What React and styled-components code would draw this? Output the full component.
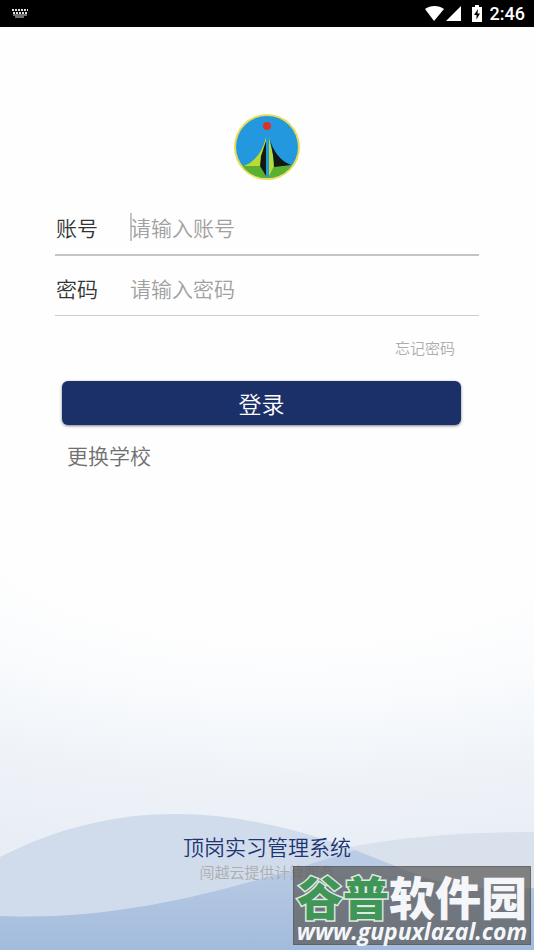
import * as React from "react";
import styled, { createGlobalStyle } from "styled-components";

const GlobalStyle = createGlobalStyle`
  *,
  *::before,
  *::after {
    box-sizing: border-box;
  }

  body {
    margin: 0;
    background: #fefefe;
    font-family: "Noto Sans CJK SC", "Noto Sans", sans-serif;
    font-weight: 350;
  }
`;

const Page = styled.div`
  display: flex;
  flex-direction: column;
  min-height: 100vh;
`;

const StatusBar = styled.header`
  display: flex;
  align-items: center;
  justify-content: space-between;
  height: 27px;
  padding: 0 9px 0 12px;
  background: #000;
  color: #fff;
`;

const StatusIcons = styled.div`
  display: flex;
  align-items: center;
`;

const BatteryIcon = styled.svg`
  margin: 0 8px;
`;

const Clock = styled.time`
  font-family: Roboto, sans-serif;
  font-size: 18px;
  font-weight: 500;
  line-height: 27px;
`;

const Main = styled.main`
  display: flex;
  flex-direction: column;
  padding: 86px 55px 0;
`;

const Logo = styled.svg`
  align-self: center;
  margin-bottom: 21px;
`;

const LoginForm = styled.form`
  display: flex;
  flex-direction: column;
`;

const Field = styled.div`
  display: flex;
  align-items: center;
  height: 54px;
  padding-bottom: 2px;
  border-bottom: ${({ $active }) =>
    $active ? "2px solid #c4c4c4" : "1px solid #cdcdcd"};

  & + & {
    margin-top: 6px;
  }
`;

const Label = styled.label`
  width: 75px;
  padding-left: 1px;
  color: #333;
  font-size: 21px;
  line-height: 28px;
`;

const Caret = styled.span`
  width: 2px;
  height: 28px;
  margin-right: -2px;
  background: #c4c4c4;
`;

const Input = styled.input`
  flex: 1;
  min-width: 0;
  padding: 0;
  border: 0;
  outline: 0;
  background: transparent;
  color: #333;
  font-family: inherit;
  font-size: 21px;
  font-weight: inherit;
  line-height: 28px;

  &::placeholder {
    color: #a0a0a0;
    opacity: 1;
  }
`;

const ForgotLink = styled.a`
  align-self: flex-end;
  margin: 20px 24px 0 0;
  color: #adadad;
  font-size: 15px;
  line-height: 24px;
  text-decoration: none;
`;

const LoginButton = styled.button`
  height: 44px;
  margin: 21px 18px 0 7px;
  padding: 0;
  border: 0;
  border-radius: 6px;
  background: #1b3069;
  box-shadow: 0 1px 3px rgba(0, 0, 0, 0.5);
  color: #fff;
  font-family: inherit;
  font-size: 23px;
  font-weight: inherit;
  line-height: 44px;
`;

const SchoolLink = styled.a`
  align-self: flex-start;
  margin: 16px 0 0 12px;
  color: #707070;
  font-size: 21px;
  line-height: 28px;
  text-decoration: none;
`;

const Footer = styled.footer`
  position: relative;
  display: flex;
  flex: 1;
  flex-direction: column;
  align-items: center;
  justify-content: flex-end;
  min-height: 240px;
  margin-top: 50px;
  padding-bottom: 66px;
  background: radial-gradient(
    ellipse 200% 100% at 55% 0,
    #fefefe 28%,
    #f9fbfd 42%,
    #eff3f8 60%,
    #e9eef6 78%
  );
`;

const Hills = styled.svg`
  position: absolute;
  bottom: 0;
  left: 0;
  width: 100%;
  height: 140px;
`;

const SystemName = styled.p`
  position: relative;
  margin: 0;
  color: #1d3470;
  font-size: 21px;
  line-height: 28px;
`;

const Provider = styled.p`
  position: relative;
  margin: 0;
  color: #adadad;
  font-size: 15px;
  line-height: 24px;
`;

const Watermark = styled.div`
  position: absolute;
  right: 3px;
  bottom: 5px;
  display: flex;
  flex-direction: column;
  align-items: center;
  justify-content: space-between;
  width: 238px;
  height: 79px;
  padding: 6px 0 0;
  border: 1px solid rgba(60, 60, 60, 0.3);
  background: rgba(84, 82, 80, 0.68);
  color: #f4f6fa;
  white-space: nowrap;
`;

const WatermarkName = styled.span`
  font-size: 46px;
  font-weight: 900;
  line-height: 44px;
`;

const Green = styled.span`
  color: #3f9656;
  -webkit-text-stroke: 3px #dfe9e3;
  paint-order: stroke fill;
`;

const WatermarkUrl = styled.span`
  font-family: "Open Sans", sans-serif;
  font-size: 23px;
  font-style: italic;
  font-weight: 700;
  line-height: 26px;
`;

function App() {
  return (
    <Page>
      <GlobalStyle />
      <StatusBar>
        <svg width="17" height="10" viewBox="0 0 17 10" aria-hidden="true">
          <path
            d="M0 1h16M1 4h15"
            stroke="#ddd"
            strokeWidth="2"
            strokeDasharray="2 1"
          />
          <path d="M1 6h14M3 8h9" stroke="#ddd" strokeWidth="1" />
        </svg>
        <StatusIcons>
          <svg width="40" height="17" viewBox="0 0 40 17" aria-hidden="true">
            <path d="M1 4C6 0 15 0 20 4L10 16Z" fill="#fff" />
            <path d="M37 1V16H22Z" fill="#fff" />
          </svg>
          <BatteryIcon width="10" height="17" viewBox="0 0 10 17" aria-hidden="true">
            <path d="M3 0h4v2h3v15H0V2h3Z" fill="#fff" />
            <path d="M6 4L2 10h2.5v4.500L8 8.500H5.500Z" fill="#000" />
          </BatteryIcon>
          <Clock>2:46</Clock>
        </StatusIcons>
      </StatusBar>

      <Main>
        <Logo width="68" height="68" viewBox="0 0 68 68" role="img" aria-label="校徽">
          <defs>
            <clipPath id="disc">
              <circle cx="34" cy="34" r="31" />
            </clipPath>
          </defs>
          <circle cx="34" cy="34" r="33" fill="#e9dc55" />
          <g clipPath="url(#disc)">
            <path d="M0 0H68V68H0Z" fill="#2398df" />
            <path d="M0 53Q34 51 68 53V68H0Z" fill="#5cb030" />
            <path d="M33 24Q28 46 11 53H28L33 40Z" fill="#b9dc35" />
            <path d="M33 28L28 43L27 53L33 63Z" fill="#101a10" />
            <path d="M36 24L40 42L41 53L36 63Z" fill="#b9dc35" />
            <path d="M36 24Q42 46 58 52L41 54Q41 42 36 24Z" fill="#101a10" />
          </g>
          <path d="M34.500 25V64" stroke="#2398df" strokeWidth="3" />
          <circle cx="34" cy="13" r="4" fill="#df3023" />
        </Logo>

        <LoginForm onSubmit={(event) => event.preventDefault()}>
          <Field $active>
            <Label htmlFor="account">账号</Label>
            <Caret />
            <Input id="account" type="text" placeholder="请输入账号" />
          </Field>
          <Field>
            <Label htmlFor="password">密码</Label>
            <Input id="password" type="password" placeholder="请输入密码" />
          </Field>
          <ForgotLink href="#forgot">忘记密码</ForgotLink>
          <LoginButton type="submit">登录</LoginButton>
          <SchoolLink href="#school">更换学校</SchoolLink>
        </LoginForm>
      </Main>

      <Footer>
        <Hills viewBox="0 0 534 140" preserveAspectRatio="none" aria-hidden="true">
          <defs>
            <linearGradient id="front" x1="0" y1="0" x2="0" y2="1">
              <stop offset="0" stopColor="#bccde6" />
              <stop offset="1" stopColor="#a3bbdc" />
            </linearGradient>
          </defs>
          <path d="M280 54Q380 22 534 22V140H280Z" fill="#d9e1ed" />
          <path
            d="M0 47C60 16 120 4 175 4C240 4 300 20 355 40L420 66V140H0Z"
            fill="#d0dcec"
          />
          <path
            d="M0 106C110 111 210 84 285 62Q330 48 355 40L420 66Q470 82 534 78V140H0Z"
            fill="url(#front)"
          />
        </Hills>
        <SystemName>顶岗实习管理系统</SystemName>
        <Provider>闯越云提供计算服务</Provider>
        <Watermark>
          <WatermarkName>
            <Green>谷普</Green>软件园
          </WatermarkName>
          <WatermarkUrl>www.gupuxlazal.com</WatermarkUrl>
        </Watermark>
      </Footer>
    </Page>
  );
}

export default App;
